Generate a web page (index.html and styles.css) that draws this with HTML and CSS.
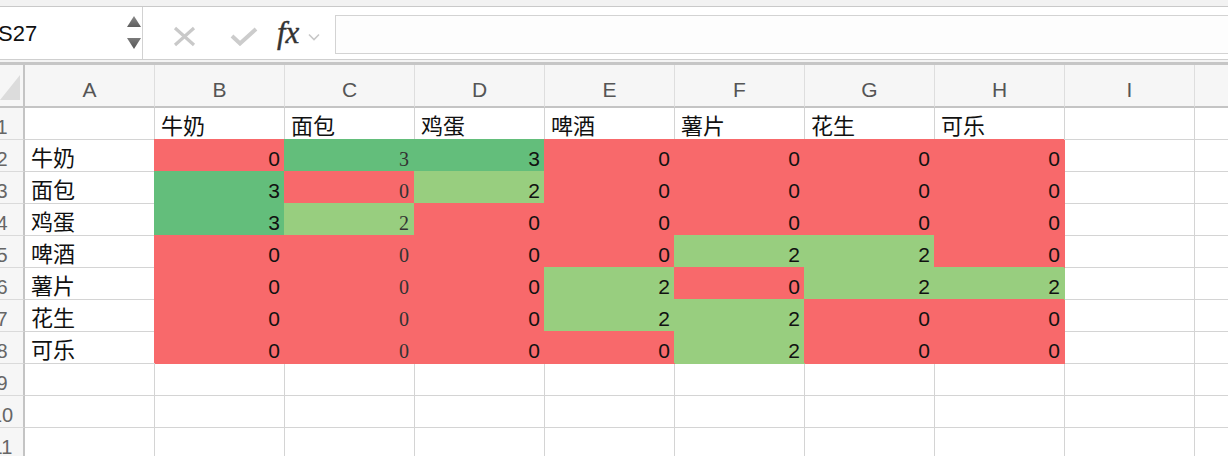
FILE: index.html
```html
<!DOCTYPE html>
<html lang="zh-CN">
<head>
<meta charset="utf-8">
<title>Sheet</title>
<link rel="stylesheet" href="styles.css">
</head>
<body>
<div class="topband"></div>
<div class="toolbar">
  <div class="namebox">
    <span class="ref">S27</span>
    <svg class="spin" width="14" height="33" viewBox="0 0 14 33">
      <defs>
        <linearGradient id="gu" x1="0" y1="0" x2="0" y2="1"><stop offset="0" stop-color="#8a8a8a"/><stop offset="1" stop-color="#5e5e5e"/></linearGradient>
        <linearGradient id="gd" x1="0" y1="0" x2="0" y2="1"><stop offset="0" stop-color="#7a7a7a"/><stop offset="1" stop-color="#555"/></linearGradient>
      </defs>
      <polygon points="7,0 14,11 0,11" fill="url(#gu)"/>
      <polygon points="0,22 14,22 7,33" fill="url(#gd)"/>
    </svg>
  </div>
  <div class="tools">
    <svg class="ic-x" width="23" height="21" viewBox="0 0 23 21"><path d="M2 2 L21 19 M21 2 L2 19" stroke="#c9c9c9" stroke-width="3.2" fill="none"/></svg>
    <svg class="ic-ok" width="28" height="19" viewBox="0 0 28 19"><polyline points="2,9 10,16.5 26,2" stroke="#cccccc" stroke-width="4" fill="none"/></svg>
    <span class="fx">fx</span>
    <svg class="ic-ch" width="12" height="8" viewBox="0 0 12 8"><polyline points="1,1.5 6,6.5 11,1.5" stroke="#c8c8c8" stroke-width="1.6" fill="none"/></svg>
  </div>
  <div class="formula"></div>
</div>
<div class="sep"></div>
<div class="sheet">
  <div class="corner"><svg width="20" height="25" viewBox="0 0 20 25"><polygon points="0,25 20,0 20,25" fill="#dcdcdc"/></svg></div>
  <div class="ch">A</div><div class="ch">B</div><div class="ch">C</div><div class="ch">D</div><div class="ch">E</div><div class="ch">F</div><div class="ch">G</div><div class="ch">H</div><div class="ch">I</div><div class="ch">J</div>

  <div class="rh"><span>1</span></div><div class="c"></div><div class="c t">牛奶</div><div class="c t">面包</div><div class="c t">鸡蛋</div><div class="c t">啤酒</div><div class="c t">薯片</div><div class="c t">花生</div><div class="c t">可乐</div><div class="c"></div><div class="c"></div>

  <div class="rh"><span>2</span></div><div class="c t">牛奶</div><div class="c n r">0</div><div class="c n s g">3</div><div class="c n g">3</div><div class="c n r">0</div><div class="c n r">0</div><div class="c n r">0</div><div class="c n r">0</div><div class="c"></div><div class="c"></div>

  <div class="rh"><span>3</span></div><div class="c t">面包</div><div class="c n g">3</div><div class="c n s r">0</div><div class="c n l">2</div><div class="c n r">0</div><div class="c n r">0</div><div class="c n r">0</div><div class="c n r">0</div><div class="c"></div><div class="c"></div>

  <div class="rh"><span>4</span></div><div class="c t">鸡蛋</div><div class="c n g">3</div><div class="c n s l">2</div><div class="c n r">0</div><div class="c n r">0</div><div class="c n r">0</div><div class="c n r">0</div><div class="c n r">0</div><div class="c"></div><div class="c"></div>

  <div class="rh"><span>5</span></div><div class="c t">啤酒</div><div class="c n r">0</div><div class="c n s r">0</div><div class="c n r">0</div><div class="c n r">0</div><div class="c n l">2</div><div class="c n l">2</div><div class="c n r">0</div><div class="c"></div><div class="c"></div>

  <div class="rh"><span>6</span></div><div class="c t">薯片</div><div class="c n r">0</div><div class="c n s r">0</div><div class="c n r">0</div><div class="c n l">2</div><div class="c n r">0</div><div class="c n l">2</div><div class="c n l">2</div><div class="c"></div><div class="c"></div>

  <div class="rh"><span>7</span></div><div class="c t">花生</div><div class="c n r">0</div><div class="c n s r">0</div><div class="c n r">0</div><div class="c n l">2</div><div class="c n l">2</div><div class="c n r">0</div><div class="c n r">0</div><div class="c"></div><div class="c"></div>

  <div class="rh"><span>8</span></div><div class="c t">可乐</div><div class="c n r">0</div><div class="c n s r">0</div><div class="c n r">0</div><div class="c n r">0</div><div class="c n l">2</div><div class="c n r">0</div><div class="c n r">0</div><div class="c"></div><div class="c"></div>

  <div class="rh"><span>9</span></div><div class="c"></div><div class="c"></div><div class="c"></div><div class="c"></div><div class="c"></div><div class="c"></div><div class="c"></div><div class="c"></div><div class="c"></div><div class="c"></div>

  <div class="rh"><span>10</span></div><div class="c"></div><div class="c"></div><div class="c"></div><div class="c"></div><div class="c"></div><div class="c"></div><div class="c"></div><div class="c"></div><div class="c"></div><div class="c"></div>

  <div class="rh"><span>11</span></div><div class="c"></div><div class="c"></div><div class="c"></div><div class="c"></div><div class="c"></div><div class="c"></div><div class="c"></div><div class="c"></div><div class="c"></div><div class="c"></div>
</div>
</body>
</html>
```
FILE: styles.css
```css
html, body {
  margin: 0;
  padding: 0;
  width: 1228px;
  height: 456px;
  overflow: hidden;
  background: #ffffff;
  font-family: "Liberation Sans", Arial, "Noto Sans CJK SC", sans-serif;
}

.topband {
  height: 6px;
  background: #f2f2f2;
  border-bottom: 1px solid #c9c9c9;
}

.toolbar {
  display: flex;
  height: 52px;
  border-bottom: 1px solid #cfcfcf;
  background: #ffffff;
}

.namebox {
  width: 142px;
  flex: none;
  border-right: 1px solid #d2d2d2;
  display: flex;
  align-items: flex-start;
  justify-content: space-between;
  overflow: hidden;
}

.ref {
  margin-left: -2px;
  margin-top: 15px;
  font-size: 22px;
  line-height: 24px;
  color: #111;
}

.spin {
  margin-top: 9px;
  margin-right: 1px;
}

.tools {
  width: 192px;
  flex: none;
  display: flex;
  align-items: flex-start;
}

.ic-x {
  margin-left: 30px;
  margin-top: 19px;
}

.ic-ok {
  margin-left: 34px;
  margin-top: 20px;
}

.fx {
  margin-left: 19px;
  margin-top: 9px;
  font-family: "Liberation Serif", "Times New Roman", serif;
  font-style: italic;
  font-size: 31px;
  line-height: 34px;
  color: #333333;
  -webkit-text-stroke: 0.4px #333333;
}

.ic-ch {
  margin-left: 9px;
  margin-top: 26px;
}

.formula {
  flex: 1;
  margin-top: 8px;
  height: 37px;
  border: 1px solid #d3d3d3;
  border-right: none;
  background: #fdfdfd;
}

.sep {
  height: 2px;
  background: #f4f4f4;
  border-bottom: 3px solid #c6c6c6;
}

.sheet {
  display: grid;
  grid-template-columns: 25px repeat(10, 130px);
  grid-template-rows: 43px;
  grid-auto-rows: 32px;
}

.corner {
  box-sizing: border-box;
  background: #f6f6f6;
  border-right: 2px solid #c4c4c4;
  border-bottom: 2px solid #c4c4c4;
  display: flex;
  align-items: flex-end;
  justify-content: flex-end;
  padding: 0 3px 6px 0;
}

.corner svg {
  display: block;
}

.ch {
  box-sizing: border-box;
  background: #f6f6f6;
  border-right: 1px solid #dedede;
  border-bottom: 2px solid #c4c4c4;
  display: flex;
  align-items: flex-end;
  justify-content: center;
  padding-bottom: 4px;
  font-size: 21px;
  line-height: 24px;
  color: #555555;
}

.rh {
  box-sizing: border-box;
  background: #f6f6f6;
  border-right: 2px solid #c4c4c4;
  border-bottom: 1px solid #dadada;
  display: flex;
  align-items: flex-end;
  overflow: hidden;
}

.rh span {
  flex: none;
  width: 50px;
  margin-left: -23px;
  text-align: center;
  font-size: 20px;
  line-height: 24px;
  color: #666666;
}

.c {
  box-sizing: border-box;
  border-right: 1px solid #d4d4d4;
  border-bottom: 1px solid #d4d4d4;
  display: flex;
  align-items: flex-end;
  padding: 0 4px 0 6px;
  font-size: 21px;
  line-height: 24px;
  color: #111111;
  white-space: nowrap;
  overflow: hidden;
}

.t {
  font-size: 22px;
}

.n {
  justify-content: flex-end;
}

.s {
  font-family: "Liberation Serif", "Times New Roman", serif;
  font-size: 20px;
  color: #333333;
  padding-right: 5px;
}

.r {
  background: #f8696b;
  border-color: #f8696b;
  box-shadow: -1px -1px 0 0 #f8696b;
}

.g {
  background: #63be7b;
  border-color: #63be7b;
  box-shadow: -1px -1px 0 0 #63be7b;
}

.l {
  background: #98ce7f;
  border-color: #98ce7f;
  box-shadow: -1px -1px 0 0 #98ce7f;
}
```
